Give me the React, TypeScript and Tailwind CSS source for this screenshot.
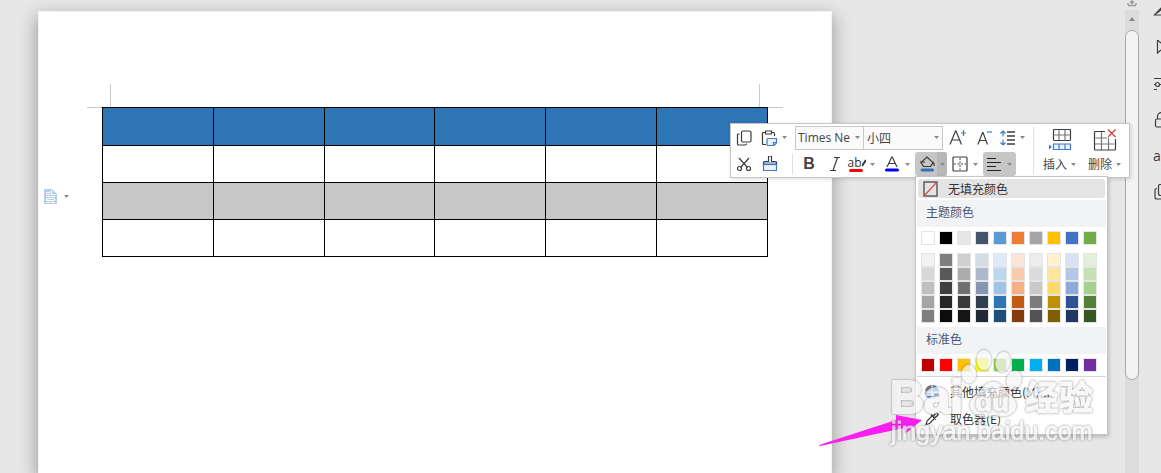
import type { ReactNode } from "react";

const themeColors = [
  "#ffffff", "#000000", "#e7e6e6", "#44546a", "#5b9bd5",
  "#ed7d31", "#a5a5a5", "#ffc000", "#4472c4", "#70ad47",
];

// one list per column, light to dark
const shades = [
  ["#f2f2f2", "#d8d8d8", "#bfbfbf", "#a5a5a5", "#7f7f7f"],
  ["#7f7f7f", "#595959", "#3f3f3f", "#262626", "#0c0c0c"],
  ["#d0cece", "#aeabab", "#757070", "#3a3838", "#171616"],
  ["#d6dce4", "#adb9ca", "#8496b0", "#323f4f", "#222a35"],
  ["#deebf6", "#bdd7ee", "#9dc3e6", "#2e75b5", "#1f4e79"],
  ["#fbe5d5", "#f7cbac", "#f4b183", "#c55a11", "#833c0b"],
  ["#ededed", "#dbdbdb", "#c9c9c9", "#7b7b7b", "#525252"],
  ["#fff2cc", "#fee599", "#ffd965", "#bf9000", "#7f6000"],
  ["#d9e2f3", "#b4c6e7", "#8eaadb", "#2f5496", "#1f3864"],
  ["#e2efd9", "#c5e0b3", "#a8d08d", "#538135", "#375623"],
];

const standardColors = [
  "#c00000", "#ff0000", "#ffc000", "#ffff00", "#92d050",
  "#00b050", "#00b0f0", "#0070c0", "#002060", "#7030a0",
];

const rows = [
  "h-[38px] bg-[#2e75b6]",
  "h-[37px] bg-white",
  "h-[37px] bg-[#c8c7c7]",
  "h-[37px] bg-white",
];

function Caret() {
  return (
    <svg width="5" height="3" viewBox="0 0 5 3" className="shrink-0">
      <path d="M0 0h5L2.5 3z" fill="#888" />
    </svg>
  );
}

interface IconProps {
  w?: number;
  h?: number;
  children: ReactNode;
}

function Icon({ w = 16, h = 16, children }: IconProps) {
  return (
    <svg
      width={w}
      height={h}
      viewBox={`0 0 ${w} ${h}`}
      fill="none"
      stroke="#3c3c3c"
      strokeWidth="1.2"
      className="shrink-0"
    >
      {children}
    </svg>
  );
}

interface ToolProps {
  label: string;
  className: string;
  caret?: boolean;
  children: ReactNode;
}

function Tool({ label, className, caret, children }: ToolProps) {
  return (
    <button
      type="button"
      aria-label={label}
      className={`flex h-6 shrink-0 items-center justify-center ${className}`}
    >
      {children}
      {caret && <Caret />}
    </button>
  );
}

function Swatch({ color }: { color: string }) {
  return (
    <button
      type="button"
      aria-label={color}
      className="block h-3.5 w-3.5 border border-[#e2e4e7]"
      style={{ backgroundColor: color }}
    />
  );
}

function Document() {
  return (
    <main className="flex min-w-0 flex-1 pt-[11px] pl-[38px]">
      <div className="relative w-full max-w-[794px] border border-b-0 border-[#f3f3f3] bg-white px-[63px] pt-[95px] shadow-[0_6px_16px_2px_rgba(0,0,0,0.3)]">
        <span className="absolute top-[72px] left-[71px] h-[23px] w-px bg-[#c8c8c8]" />
        <span className="absolute top-[95px] left-12 h-px w-[15px] bg-[#c8c8c8]" />
        <span className="absolute top-[72px] right-[71px] h-[23px] w-px bg-[#c8c8c8]" />
        <span className="absolute top-[95px] right-12 h-px w-[15px] bg-[#c8c8c8]" />
        <table className="w-full table-fixed border-collapse">
          <tbody>
            {rows.map((row, i) => (
              <tr key={i} className={row}>
                {themeColors.slice(0, 6).map((c) => (
                  <td key={c} className="border border-black" />
                ))}
              </tr>
            ))}
          </tbody>
        </table>
        <button
          type="button"
          aria-label="段落布局"
          className="absolute top-[177px] left-[5px] flex items-center gap-[7px]"
        >
          <svg width="13" height="15" viewBox="0 0 13 15">
            <path d="M0 0h8l5 5v10H0z" fill="#b9cde9" />
            <path d="M7.5 1v4.5H12M2 3.5h4M2 5.5h4M2 7.5h9M2.5 9.5h8v2h-8zM2 13.5h4M7 13.5h4" fill="none" stroke="#fff" />
          </svg>
          <Caret />
        </button>
      </div>
    </main>
  );
}

function ScrollBar() {
  return (
    <div className="flex w-3.5 shrink-0 flex-col items-center">
      <svg width="10" height="10" viewBox="0 0 10 10" className="shrink-0">
        <path d="M1 5.5h8M1 3v2M9 3v2M5 0v3M3 1.5l2 2 2-2" stroke="#999" strokeWidth="1.4" fill="none" />
      </svg>
      <div className="flex w-full flex-1 flex-col items-center bg-[#dcdcdc]">
        <svg width="14" height="20" viewBox="0 0 14 20" className="shrink-0">
          <path d="M4 11l3-4 3 4z" fill="#888" />
        </svg>
        <div className="h-[350px] w-full shrink-0 rounded-full border border-[#a8a8a8] bg-[#f3f3f3]" />
      </div>
    </div>
  );
}

function SidePane() {
  return (
    <aside className="flex w-[22px] shrink-0 flex-col gap-5 overflow-hidden pt-1 pl-3.5">
      <Icon>
        <path d="M10 2L1.500 11h14M4 9l6-5" />
      </Icon>
      <Icon>
        <path d="M4.500 0v13L12 6.500z" />
      </Icon>
      <Icon>
        <path d="M1 2.500h15M1 13.500h3M7 8.500h9" />
        <circle cx="4.500" cy="8.500" r="2" />
        <path d="M1 8.500h1.500" />
      </Icon>
      <Icon>
        <path d="M4.500 7V4.500a4 4 0 0 1 8 0V7M2.500 8.500q0-1.500 1.500-1.500h11v8H4q-1.500 0-1.500-1.500z" />
      </Icon>
      <span className="h-4 font-['Open_Sans',sans-serif] text-sm leading-4 text-[#3c3c3c]">a</span>
      <Icon>
        <path d="M5.500 2.500q0-2 2-2H15v11H7.500q-2 0-2-2zM4 4.500q-2 0-2 2V13q0 2 2 2h9" />
      </Icon>
    </aside>
  );
}

function Toolbar() {
  return (
    <div className="absolute top-[123px] left-[730px] flex border border-[#c6c6c6] bg-white pr-0.5 shadow-[1px_1px_4px_rgba(0,0,0,0.15)]">
      <div className="flex flex-col">
        <div className="flex h-[27px] items-center">
          <Tool label="复制" className="w-[26px]">
            <Icon>
              <rect x="5.500" y="1" width="9.500" height="11" rx="1.500" />
              <path d="M3.500 4H2.500q-1 0-1 1v9q0 1 1 1H9q1.500 0 1.500-1.500" />
            </Icon>
          </Tool>
          <Tool label="粘贴" className="w-[38px] gap-1 pr-1" caret>
            <Icon w={17}>
              <path d="M5 14.500H2.500q-1 0-1-1V3.500q0-1 1-1H4M10 2.500h2.500q1 0 1 1V6" />
              <path d="M4.500 1h6v3h-6z" />
              <path d="M7 8.500h8.500V13l-2.500 2.500H7q-1 0-1-1v-5q0-1 1-1zM12.500 15v-2.500h3" stroke="#4179c8" fill="#eaf2fc" />
            </Icon>
          </Tool>
          <div className="relative flex w-[69px] items-center">
            <select
              aria-label="字体"
              className="h-6 w-full appearance-none overflow-hidden border border-[#c8c8c8] bg-[#fafafa] pr-[13px] pl-0.5 font-['Open_Sans',sans-serif] text-xs text-[#444]"
            >
              <option>Times New Roman</option>
            </select>
            <span className="pointer-events-none absolute right-1">
              <Caret />
            </span>
          </div>
          <div className="relative -ml-px flex w-20 items-center">
            <select
              aria-label="字号"
              className="h-6 w-full appearance-none border border-[#c8c8c8] bg-[#fafafa] pl-[3px] text-xs text-[#444]"
            >
              <option>小四</option>
            </select>
            <span className="pointer-events-none absolute right-1">
              <Caret />
            </span>
          </div>
          <Tool label="增大字号" className="w-[30px]">
            <Icon w={18}>
              <path d="M1 14.500L6.500 1h.5l5.500 13.500M3 10h7.500" />
              <path d="M14.500 0v6M12 3h5" stroke="#4179c8" />
            </Icon>
          </Tool>
          <Tool label="减小字号" className="w-6">
            <Icon>
              <path d="M1 14.500L5.500 2.500H6l4.500 12M2.500 10.500H9" />
              <path d="M10 2h5" stroke="#4179c8" />
            </Icon>
          </Tool>
          <Tool label="行距" className="w-9 gap-1 pr-[5px]" caret>
            <Icon>
              <path d="M7 2h8M7 6h8M7 10h8M7 14h8" strokeWidth="1.500" />
              <path d="M3 1v5.500M.5 3.500L3 1l2.500 2.500M3 9.500V15M.5 12.500L3 15l2.500-2.500" stroke="#4179c8" />
            </Icon>
          </Tool>
        </div>
        <div className="flex h-[26px] items-center">
          <Tool label="剪切" className="w-[26px]">
            <Icon>
              <path d="M3 2l8.500 9.500M13 2L4.500 11.500" />
              <circle cx="3.500" cy="12.500" r="2" />
              <circle cx="12.500" cy="12.500" r="2" />
            </Icon>
          </Tool>
          <Tool label="格式刷" className="w-[26px]">
            <Icon>
              <path d="M1.500 7h13v7.500h-13z" stroke="#4179c8" fill="#eaf2fc" />
              <path d="M1.500 8V6.500q0-1 1-1H6.500V1q0-1 1-1h1q1 0 1 1v4.500h4q1 0 1 1V8" />
              <path d="M1.500 8.500h13" stroke="#4179c8" />
            </Icon>
          </Tool>
          <span className="ml-[9px] h-5 w-px bg-[#e0e0e0]" />
          <Tool label="加粗" className="w-8 font-['Liberation_Sans',Arial,sans-serif] text-base font-bold text-[#444]">
            B
          </Tool>
          <Tool label="倾斜" className="w-5">
            <Icon w={12}>
              <path d="M5 1.500h6M1 14.500h6M8.500 1.500L4 14.500" />
            </Icon>
          </Tool>
          <Tool label="突出显示" className="w-9 gap-1 pr-1" caret>
            <span className="flex flex-col items-center font-['Open_Sans',sans-serif] text-xs leading-3 text-[#333]">
              <span className="flex">
                ab
                <svg width="4" height="12" viewBox="0 0 4 12">
                  <path d="M4 3L0 9" stroke="#333" strokeWidth="2" />
                </svg>
              </span>
              <span className="h-[3px] w-3.5 rounded-full bg-[#ff0000]" />
            </span>
          </Tool>
          <Tool label="字体颜色" className="w-[34px] gap-[6px] pr-0.5" caret>
            <Icon w={14}>
              <path d="M2 11L6.750 1h.5L12 11M4 7.500h6" />
              <path d="M1.500 14h11" stroke="#0000ff" strokeWidth="3" strokeLinecap="round" />
            </Icon>
          </Tool>
          <button type="button" aria-label="底纹颜色" className="flex h-6 w-8 overflow-hidden rounded-[3px] bg-[#c6c6c6]">
            <span className="flex h-6 w-[22px] items-center justify-center pl-0.5">
              <Icon>
                <path d="M4.500 10.500L2 6.500 8 1l6 5.500-2.500 4z" />
                <path d="M1 6h5M14 6q1.500 1.500 1 4" />
                <path d="M3 14h10.500" stroke="#2e75b6" strokeWidth="3" strokeLinecap="round" />
              </Icon>
            </span>
            <span className="flex h-6 flex-1 items-center justify-center bg-[#b7b7b7]">
              <Caret />
            </span>
          </button>
          <Tool label="边框" className="w-9 gap-[5px]" caret>
            <Icon>
              <rect x="1" y="1" width="14" height="14" rx="1" />
              <path d="M8 2v12M2 8h12" strokeDasharray="2 1.500" strokeWidth="1" />
            </Icon>
          </Tool>
          <Tool label="对齐方式" className="w-[33px] gap-[5px] rounded-[3px] bg-[#c6c6c6]" caret>
            <Icon w={15}>
              <path d="M0 2.500h9M0 6.500h14M0 10.500h9M0 14.500h14" stroke="#222" strokeWidth="1" />
            </Icon>
          </Tool>
        </div>
      </div>
      <div className="my-[3px] mr-[3px] w-px bg-[#e0e0e0]" />
      <button type="button" className="flex w-[45px] flex-col items-center gap-[5px] pt-[5px] text-xs text-[#444]">
        <Icon w={24} h={22}>
          <path d="M5.500 10.500v-9q0-1 1-1h15q1 0 1 1v9q0 1-1 1h-15q-1 0-1-1z" />
          <path d="M5.500 6h17M11 .5v11M17 .5v11" stroke="#777" />
          <path d="M5.500 15h17v5.500h-17zM11 15v5.500M17 15v5.500" stroke="#4179c8" fill="#eaf2fc" />
          <path d="M1 15.500l3 2.500-3 2.500z" fill="#4179c8" stroke="none" />
        </Icon>
        <span className="flex items-center gap-1 leading-4">
          插入
          <Caret />
        </span>
      </button>
      <button type="button" className="flex w-[45px] flex-col items-center gap-[5px] pt-[5px] text-xs text-[#444]">
        <Icon w={24} h={22}>
          <path d="M2.500 9H14M1.500 15h20M8.500 2.500V21M15.500 9v12" stroke="#777" />
          <path d="M12 2.500H2.500q-1 0-1 1V20q0 1 1 1h19q1 0 1-1V10" />
          <path d="M15 .5l7.500 7.500M22.500.5L15 8" stroke="#d23c3c" />
        </Icon>
        <span className="flex items-center gap-1 leading-4">
          删除
          <Caret />
        </span>
      </button>
    </div>
  );
}

function ColorMenu() {
  return (
    <div className="absolute top-[176px] left-[915px] flex w-[193px] flex-col border border-[#c6c6c6] bg-white px-px pt-0.5 pb-0.5 text-xs text-[#333] shadow-[1px_2px_4px_rgba(0,0,0,0.2)]">
      <button type="button" className="mx-px flex h-[19px] items-center gap-[10px] rounded-[3px] bg-[#e4e4e4] pl-[5px]">
        <Icon w={15}>
          <rect x="1" y="1" width="13" height="14" />
          <path d="M1.500 14.500l12-13" stroke="#d94b4b" />
        </Icon>
        无填充颜色
      </button>
      <h2 className="mt-0.5 flex h-[27px] items-center bg-[#f1f3f5] pb-[3px] pl-[9px] text-[#45587c]">主题颜色</h2>
      <div className="mt-1 flex gap-1 pl-1">
        {themeColors.map((c) => (
          <Swatch key={c} color={c} />
        ))}
      </div>
      <div className="mt-2 flex gap-1 pl-1">
        {shades.map((column, i) => (
          <div key={i} className="flex flex-col">
            {column.map((c) => (
              <Swatch key={c} color={c} />
            ))}
          </div>
        ))}
      </div>
      <h2 className="mt-1 flex h-[27px] items-center bg-[#f1f3f5] pb-[3px] pl-[9px] text-[#45587c]">标准色</h2>
      <div className="mt-1 flex gap-1 pl-1">
        {standardColors.map((c) => (
          <Swatch key={c} color={c} />
        ))}
      </div>
      <div className="mt-1 h-px bg-[#d6d6d6]" />
      <button type="button" className="mt-px flex h-[27px] items-center gap-[10px] pl-[7px]">
        <svg width="16" height="16" viewBox="0 0 16 16">
          <path d="M7.500 7.500V1a6.500 6.500 0 0 0-6.500 6.500z" fill="#777" />
          <path d="M8.500 7.500V1A6.500 6.500 0 0 1 15 7.500z" fill="#3f78cc" />
          <path d="M7.500 8.500V15A6.500 6.500 0 0 1 1 8.500z" fill="#6a9be0" />
          <path d="M8.500 8.500V15A6.500 6.500 0 0 0 15 8.500z" fill="#aac6ee" />
        </svg>
        其他填充颜色(M)...
      </button>
      <button type="button" className="flex h-[27px] items-center gap-[10px] pl-[7px]">
        <Icon>
          <path d="M8 5L3 10 2 13.500 5.500 12.500 10.500 7.500" />
          <path d="M7 3.500L12 8.500M9 5.500L11.500 2.500q1-1 2 0t0 2L10.500 7z" strokeWidth="1.600" />
        </Icon>
        取色器(E)
      </button>
    </div>
  );
}

function Watermark() {
  return (
    <svg
      width="220"
      height="104"
      viewBox="0 0 220 104"
      className="pointer-events-none absolute top-[344px] left-[886px] opacity-70 [&>*]:drop-shadow-[0_0_1px_rgba(80,80,80,0.9)]"
      fill="#f6f6f6"
      stroke="#f6f6f6"
      strokeLinejoin="round"
    >
      <g strokeWidth="1">
        <ellipse cx="83" cy="30" rx="7" ry="9" />
        <ellipse cx="98" cy="16" rx="7" ry="10" />
        <ellipse cx="117" cy="18" rx="7" ry="10" transform="rotate(12 117 18)" />
        <ellipse cx="128" cy="36" rx="7" ry="9" transform="rotate(20 128 36)" />
        <path d="M107 38c8 0 11 8 17 13s8 12 3 17-12 4-20 4-15 2-20-4-3-12 3-17 9-13 17-13z" />
      </g>
      <g fontFamily="'Liberation Sans', Arial, sans-serif" fontWeight="700">
        <text x="4" y="69" fontSize="47" strokeWidth="2">Bai</text>
        <text x="89" y="67" fontSize="28">du</text>
      </g>
      <text x="139" y="66" fontSize="34" fontWeight="700" fontFamily="'Noto Sans CJK SC', sans-serif">经验</text>
      <text x="5" y="96" fontSize="25" fontFamily="'Liberation Sans', Arial, sans-serif">jingyan.baidu.com</text>
    </svg>
  );
}

export default function App() {
  return (
    <div className="relative flex min-h-screen overflow-hidden bg-[#e7e7e7] font-['Noto_Sans_CJK_SC',sans-serif]">
      <Document />
      <ScrollBar />
      <SidePane />
      <Toolbar />
      <ColorMenu />
      {/* pointer to the colour picker entry */}
      <svg width="104" height="32" viewBox="0 0 104 32" className="pointer-events-none absolute top-[415px] left-[819px]">
        <path d="M0 30L77 5V0l26 5-17 14-1-6L1 31z" fill="#fa1ef0" />
      </svg>
      <Watermark />
    </div>
  );
}
